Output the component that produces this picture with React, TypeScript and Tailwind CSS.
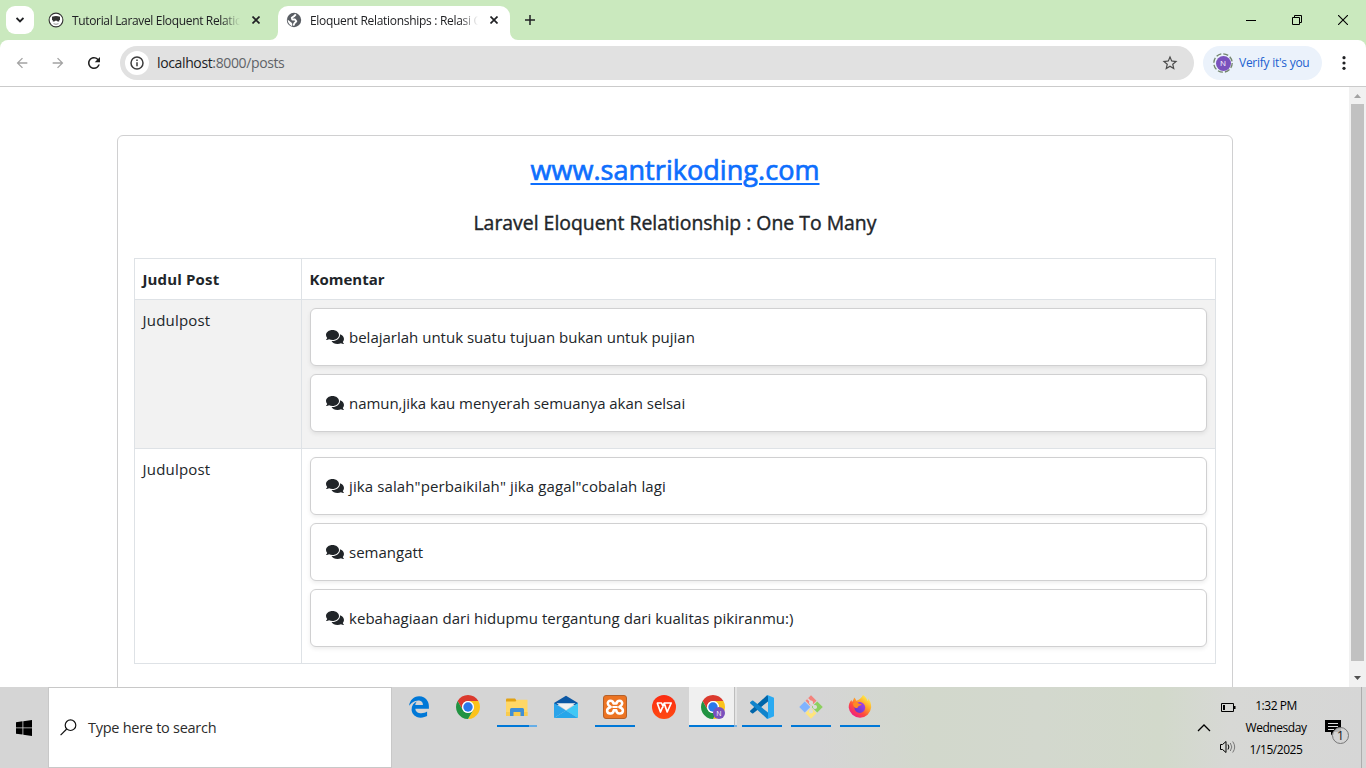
import React from "react";
import { FaComments, FaEdgeLegacy } from "react-icons/fa";
import { MdRefresh, MdStarBorder, MdArrowBack, MdArrowForward } from "react-icons/md";

type Comment = { text: string; tracking: string };
type Post = { title: string; comments: Comment[] };

const posts: Post[] = [
  {
    title: "Judulpost",
    comments: [
      { text: "belajarlah untuk suatu tujuan bukan untuk pujian", tracking: "tracking-normal" },
      { text: "namun,jika kau menyerah semuanya akan selsai", tracking: "tracking-[-0.040px]" },
    ],
  },
  {
    title: "Judulpost",
    comments: [
      { text: 'jika salah"perbaikilah" jika gagal"cobalah lagi', tracking: "tracking-[0.110px]" },
      { text: "semangatt", tracking: "tracking-normal" },
      { text: "kebahagiaan dari hidupmu tergantung dari kualitas pikiranmu:)", tracking: "tracking-[0.040px]" },
    ],
  },
];

function CloseGlyph() {
  return (
    <svg width="8" height="8" viewBox="0 0 8 8" stroke="#202124" strokeWidth="1.7">
      <path d="M.5.5l7 7M7.5.5l-7 7" />
    </svg>
  );
}

function GlobeIcon() {
  return (
    <svg width="16" height="16" viewBox="0 0 16 16">
      <circle cx="8" cy="8" r="7.200" fill="#5a5e64" />
      <path
        fill="none"
        stroke="#fff"
        strokeWidth="1.900"
        strokeLinejoin="round"
        d="M9.800 2.300L8 4.300 5.800 5.800 6.300 7.500H9L10.300 9.300 8.500 11.200 7.300 13.600"
      />
      <path fill="#fff" d="M1.600 7.600L5 10.200 6.200 11.500 6 14.200Q2 12.500 1.600 7.600z" />
    </svg>
  );
}

function ChromeIcon({ badge = false }: { badge?: boolean }) {
  return (
    <div className="relative size-6">
      <svg width="24" height="24" viewBox="0 0 48 48">
        <path fill="#db3a2e" d="M24 12H44.78A24 24 0 0 0 3.22 12L13.61 30A12 12 0 0 1 24 12Z" />
        <path fill="#fcc31c" d="M34.39 30L24 48A24 24 0 0 0 44.78 12H24A12 12 0 0 1 34.39 30Z" />
        <path fill="#229342" d="M13.61 30L3.22 12A24 24 0 0 0 24 48L34.39 30A12 12 0 0 1 13.61 30Z" />
        <circle cx="24" cy="24" r="12" fill="#fff" />
        <circle cx="24" cy="24" r="9.4" fill="#2b78ea" />
      </svg>
      {badge && (
        <span className="absolute left-3 top-3 flex size-3 items-center justify-center rounded-full bg-[#7a51bd] font-['Open_Sans',sans-serif] text-[7px] leading-none text-white">
          N
        </span>
      )}
    </div>
  );
}

function ExplorerIcon() {
  return (
    <svg width="24" height="24" viewBox="0 0 24 24">
      <path fill="#e2a213" d="M1 4.5q0-1 1-1h8l1.5 2v2H1z" />
      <path fill="#ffd766" d="M1 6.5h9.5l1.5-1.8h10.5V21H1z" />
      <path fill="#f9cb4d" d="M1 17h21.500v4H1z" />
      <path fill="#3f8fd6" d="M5 14.500q0-1.500 1.500-1.500h11q1.500 0 1.500 1.500V21h-3.500v-4h-7v4H5z" />
    </svg>
  );
}

function MailIcon() {
  return (
    <svg width="24" height="24" viewBox="0 0 24 24">
      <path fill="#0b57a4" d="M0 8L12 .8 24 8v2H0z" />
      <path fill="#f2f2f2" d="M2.500 8.300h19L12 15z" />
      <path fill="#3fc8f6" d="M24 8l-12 7.500L24 23z" />
      <path fill="#2ba4ea" d="M0 8v15l12-7.500z" />
      <path fill="#26a6ea" d="M0 23l12-7.500L24 23z" />
    </svg>
  );
}

function XamppIcon() {
  return (
    <svg width="24" height="24" viewBox="0 0 24 24">
      <rect x=".5" y=".5" width="23" height="23" rx="2.500" fill="#ec7423" stroke="#b4602a" />
      <g fill="none" stroke="#fff" strokeWidth="2.500" strokeLinecap="round" strokeLinejoin="round">
        <path d="M10.500 8.500C10 4.800 4.300 5 4.800 8.600c.2 1.600 1.300 2.200 2.900 3.400-2.500 1-3.900 2-3.600 4 .5 3.500 6.300 3.200 6.600-.7h2.600c.3 3.900 6.100 4.200 6.600.7.3-2-1.100-3-3.600-4 1.600-1.200 2.700-1.800 2.900-3.400.5-3.600-5.200-3.800-5.700-.1z" />
        <path d="M10 12h4" strokeWidth="1.800" />
      </g>
    </svg>
  );
}

function WpsIcon() {
  return (
    <svg width="24" height="24" viewBox="0 0 24 24">
      <defs>
        <linearGradient id="wps" x1="0" y1="0" x2="0" y2="1">
          <stop offset="0" stopColor="#fb2b12" />
          <stop offset="1" stopColor="#ff4a12" />
        </linearGradient>
      </defs>
      <circle cx="12" cy="12" r="12" fill="url(#wps)" />
      <path d="M4.800 8H9.500L11.500 12.500M5.200 8L8.500 17L12.200 8.200L15.200 17L19.200 8H12.200" fill="none" stroke="#fff" strokeWidth="1.700" strokeLinejoin="round" />
    </svg>
  );
}

function CodeIcon() {
  return (
    <svg width="24" height="24" viewBox="0 0 24 24">
      <path fill="#0065a9" d="M18 0v6.500L3.300 18.300a1 1 0 0 1-1.300 0L.4 16.900a1 1 0 0 1 0-1.500L16.500.8Q17.200 0 18 0z" />
      <path fill="#1084cc" d="M18 24v-6.500L3.300 5.700a1 1 0 0 0-1.300 0L.4 7.100a1 1 0 0 0 0 1.500L16.500 23.200q.7.8 1.500.8z" />
      <path fill="#2aaaf2" d="M17.500 0L24 2.800v18.400L17.500 24q-.7 0-1.500-.7 2 .5 2-1.300V2Q18 .2 16 .7q.8-.7 1.500-.7z" />
    </svg>
  );
}

function GitIcon() {
  return (
    <svg width="24" height="24" viewBox="0 0 24 24">
      <g transform="rotate(45 12 12)">
        <rect x="3.700" y="3.700" width="7.800" height="7.800" fill="#f4837d" />
        <rect x="12.500" y="3.700" width="7.800" height="7.800" fill="#8cd05f" />
        <rect x="3.700" y="12.500" width="7.800" height="7.800" fill="#80b3ff" />
        <rect x="12.500" y="12.500" width="7.800" height="7.800" fill="#ffe57c" />
      </g>
      <g stroke="#dcdcdc" strokeWidth="1.500" fill="#dcdcdc">
        <path d="M8.500 3.500L12 7v10M12 8l4 4" fill="none" />
        <circle cx="12" cy="7.500" r="1.300" />
        <circle cx="12" cy="16.500" r="1.300" />
        <circle cx="16" cy="12" r="1.300" />
      </g>
    </svg>
  );
}

function FirefoxIcon() {
  return (
    <svg width="24" height="24" viewBox="0 0 24 24">
      <defs>
        <linearGradient id="fox" x1=".85" y1=".1" x2=".2" y2=".95">
          <stop offset="0" stopColor="#fff04a" />
          <stop offset=".35" stopColor="#ffa52a" />
          <stop offset=".65" stopColor="#ff4d3c" />
          <stop offset="1" stopColor="#ed1a8a" />
        </linearGradient>
        <linearGradient id="globe" x1="0" y1="1" x2="1" y2="0">
          <stop offset="0" stopColor="#5a36c9" />
          <stop offset="1" stopColor="#b045e8" />
        </linearGradient>
      </defs>
      <path fill="url(#fox)" d="M15 0c3 2 4 4 4.500 6 1-.8.800-1.800.5-2.700 2 2 3.200 5 3.200 9A11.300 11.300 0 0 1 .7 12.500c0-3 1-5.700 2.800-7.500l.5 2C5 5.500 6 4.200 6 2.500c1.300 1 2 2 2.300 3.300C11 5 13.500 3 15 0z" />
      <circle cx="11.800" cy="12.500" r="5.400" fill="url(#globe)" />
      <path fill="#ff8a24" d="M5 8.500c2-2 4.500-1.700 6 .2 1 .2 2 .3 2.700.8-1 1.200-2.500 1-3.200 1.700-.8.700-.5 1.500-1.500 1.800-2 .6-4-1.500-4-4.500z" />
    </svg>
  );
}

type Task = { name: string; icon: React.ReactNode; state?: "open" | "multi" | "active" };

const tasks: Task[] = [
  { name: "edge", icon: <FaEdgeLegacy className="size-[22px] text-[#0078d7]" /> },
  { name: "chrome", icon: <ChromeIcon /> },
  { name: "explorer", icon: <ExplorerIcon />, state: "multi" },
  { name: "mail", icon: <MailIcon /> },
  { name: "xampp", icon: <XamppIcon />, state: "open" },
  { name: "wps", icon: <WpsIcon /> },
  { name: "chrome-profile", icon: <ChromeIcon badge />, state: "active" },
  { name: "code", icon: <CodeIcon />, state: "open" },
  { name: "git", icon: <GitIcon />, state: "open" },
  { name: "firefox", icon: <FirefoxIcon />, state: "open" },
];

function TaskButton({ task }: { task: Task }) {
  const active = task.state === "active";
  return (
    <div className={active ? "flex h-10 w-12 bg-[#e3e3e3]" : "flex h-10 w-12"}>
      <div className={active ? "flex w-full flex-col items-center bg-[linear-gradient(90deg,#f0f0f0_45px,#bdbdbd_45px,#bdbdbd_46px,#e3e3e3_46px)]" : "flex w-full flex-col items-center"}>
        <div className="flex h-[38px] items-center pt-[2px]">{task.icon}</div>
        {task.state === "open" && <div className="h-[2px] w-10 bg-[#0078d7]" />}
        {task.state === "multi" && (
          <div className="flex h-[2px] w-10">
            <div className="w-8 bg-[#0078d7]" />
            <div className="w-2 bg-[#66aee7]" />
          </div>
        )}
        {active && (
          <div className="flex h-[2px] w-12">
            <div className="w-[45px] bg-[#0078d7]" />
            <div className="w-[3px] bg-[#79b2e2]" />
          </div>
        )}
      </div>
    </div>
  );
}

function TabStrip() {
  return (
    <div className="flex h-10 shrink-0 bg-[#cae9be] text-[12px] text-[#202124]">
      <div className="ml-[6px] mt-[6px] flex size-7 items-center justify-center rounded-[9px] bg-white">
        <svg width="8" height="6" viewBox="0 0 8 6" fill="none" stroke="#202124" strokeWidth="1.900">
          <path d="M.5 1L4 4.500 7.500 1" />
        </svg>
      </div>
      <div className="ml-[14px] flex w-[222px] items-center">
        <svg width="16" height="16" viewBox="0 0 16 16">
          <circle cx="8" cy="8" r="6.900" fill="#fff" stroke="#333" strokeWidth="1.100" />
          <path fill="#333" d="M4 4.700Q8 3.200 12 4.700V8l-.8.3V9.500H9.500L9 8.700H7l-.5.8H4.800V8.300L4 8z" />
          <path d="M5.500 11.700q2.500 1.200 5 0" stroke="#777" strokeWidth=".8" fill="none" />
        </svg>
        <span className="ml-2 w-[168px] overflow-hidden whitespace-nowrap pt-px tracking-[-0.340px] [mask-image:linear-gradient(90deg,#000_150px,transparent_168px)]">
          Tutorial Laravel Eloquent Relatic
        </span>
        <span className="ml-[12px]"><CloseGlyph /></span>
      </div>
      <svg className="self-end" width="8" height="8" viewBox="0 0 8 8"><path fill="#fff" d="M8 0v8H0A8 8 0 0 0 8 0z" /></svg>
      <div className="mt-[6px] flex w-[232px] items-center rounded-t-[10px] bg-white pb-[6px] pl-2">
        <GlobeIcon />
        <span className="ml-2 w-[168px] overflow-hidden whitespace-nowrap pt-px tracking-[-0.300px] [mask-image:linear-gradient(90deg,#000_150px,transparent_168px)]">
          Eloquent Relationships : Relasi C
        </span>
        <span className="ml-[12px]"><CloseGlyph /></span>
      </div>
      <svg className="self-end" width="8" height="8" viewBox="0 0 8 8"><path fill="#fff" d="M0 0v8h8A8 8 0 0 1 0 0z" /></svg>
      <div className="ml-[7px] flex items-center">
        <svg width="10" height="10" viewBox="0 0 10 10" stroke="#202124" strokeWidth="1.500"><path d="M5 0v10M0 5h10" /></svg>
      </div>
      <div className="ml-auto flex">
        <div className="flex w-[46px] items-center justify-center"><div className="h-px w-[10px] bg-black" /></div>
        <div className="flex w-[46px] items-center justify-center">
          <svg width="10" height="10" viewBox="0 0 10 10" fill="none" stroke="#000"><path d="M.5 2.500h7v7h-7zM2.500 2.500v-2h7v7h-2" /></svg>
        </div>
        <div className="flex w-[46px] items-center justify-center">
          <svg width="10" height="10" viewBox="0 0 10 10" stroke="#000" strokeWidth="1.100"><path d="M0 0l10 10M10 0L0 10" /></svg>
        </div>
      </div>
    </div>
  );
}

function Toolbar() {
  return (
    <div className="h-[47px] shrink-0 bg-[#cae9be]">
      <div className="flex h-full items-center rounded-t-lg border-b border-[#cbcbcb] bg-white">
        <MdArrowBack className="ml-[14px] size-4 text-[#a3a3a3]" />
        <MdArrowForward className="ml-5 size-4 text-[#a3a3a3]" />
        <MdRefresh className="ml-[19px] size-[18px] text-[#1f1f1f]" />
        <div className="ml-[17px] flex h-[34px] w-[1074px] items-center rounded-full bg-[#e1e1e1] pl-[5px] pr-[15px]">
          <div className="flex size-6 items-center justify-center rounded-full bg-white">
            <svg width="14" height="14" viewBox="0 0 14 14" fill="none" stroke="#3c3c3c" strokeWidth="1.500">
              <circle cx="7" cy="7" r="6" />
              <path d="M7 6.200v4M7 3.600v1.500" />
            </svg>
          </div>
          <span className="ml-2 pb-px text-[14px] tracking-[-0.37px] text-[#202124]">
            localhost<span className="text-[#5f6368]">:8000/posts</span>
          </span>
          <MdStarBorder className="ml-auto size-[18px] text-[#4a4a4a]" />
        </div>
        <div className="ml-[9px] flex h-[34px] w-[119px] items-center rounded-full bg-[#ebf2fb] pl-[10px]">
          <div className="relative flex size-5 items-center justify-center">
            <svg className="absolute inset-0" width="20" height="20" viewBox="0 0 20 20" fill="none" stroke="#72846c" strokeWidth="1.300">
              <circle cx="10" cy="10" r="9.200" strokeDasharray="5.200 2.025" />
            </svg>
            <span className="flex size-[15px] items-center justify-center rounded-full bg-[#7a51bd] text-[8px] leading-none text-white">N</span>
          </div>
          <span className="ml-[6px] whitespace-nowrap text-[12px] tracking-[-0.26px] text-[#1b5fd0]">Verify it's you</span>
        </div>
        <svg className="ml-[20px]" width="4" height="14" viewBox="0 0 4 14" fill="#202124">
          <circle cx="2" cy="1.700" r="1.600" /><circle cx="2" cy="7" r="1.600" /><circle cx="2" cy="12.300" r="1.600" />
        </svg>
      </div>
    </div>
  );
}

function CommentCard({ comment }: { comment: Comment }) {
  return (
    <div className="mb-2 flex h-[58px] items-center rounded-md border border-[#d0d0d1] bg-white pl-[15px] pr-4 shadow-[0_2px_4px_rgba(0,0,0,0.075)]">
      <FaComments className="h-4 w-[18px] shrink-0" preserveAspectRatio="none" />
      <span className={"ml-[5px] whitespace-nowrap " + comment.tracking}>{comment.text}</span>
    </div>
  );
}

function Page() {
  return (
    <div className="flex min-h-0 flex-1">
      <main className="flex-1 overflow-hidden bg-white px-[117px] pt-12 text-[15px] leading-6 text-[#212529]">
        <div className="h-[620px] w-[1116px] rounded-md border border-[#d0d0d1] p-4">
          <h3 className="pt-px text-center text-[27px] font-normal leading-[34px] tracking-[0.05px] [-webkit-text-stroke:0.700px]">
            <a className="text-[#0d6efd] underline decoration-2 underline-offset-[3px]">www.santrikoding.com</a>
          </h3>
          <h5 className="mt-[24px] text-center text-[19.400px] font-normal leading-6 tracking-normal [-webkit-text-stroke:0.400px]">Laravel Eloquent Relationship : One To Many</h5>
          <table className="mt-[23px] w-[1082px] table-fixed border-collapse">
            <thead>
              <tr>
                <th className="w-[167px] border border-[#dee2e6] p-2 pl-[7.500px] text-left font-bold tracking-[0.150px]">Judul Post</th>
                <th className="border border-[#dee2e6] p-2 pl-[7.500px] text-left font-bold">Komentar</th>
              </tr>
            </thead>
            <tbody>
              {posts.map((post, i) => (
                <tr key={i} className="odd:bg-[#f2f2f2]">
                  <td className="border border-[#dee2e6] p-2 pl-[7.500px] align-top tracking-[0.200px]">{post.title}</td>
                  <td className="border border-[#dee2e6] p-2 align-top">
                    {post.comments.map((c) => <CommentCard key={c.text} comment={c} />)}
                  </td>
                </tr>
              ))}
            </tbody>
          </table>
        </div>
      </main>
      <div className="flex w-[17px] shrink-0 flex-col items-center bg-[#f1f1f1]">
        <svg width="17" height="17" viewBox="0 0 17 17" className="shrink-0"><path fill="#a3a3a3" d="M5 11h7L8.500 7z" /></svg>
        <div className="w-[13px] flex-1 bg-[#c1c1c1]" />
        <svg width="17" height="26" viewBox="0 0 17 26" className="shrink-0"><path fill="#505050" d="M5 15h7l-3.500 4z" /></svg>
      </div>
    </div>
  );
}

function Taskbar() {
  return (
    <div className="flex h-[81px] shrink-0 bg-[linear-gradient(90deg,#d5d5d5_0%,#d5d5d5_60%,#d2d8cc_68%,#d3d8ce_76%,#d2d9cb_85%,#d7d8d5_90%,#d6d6d6_100%)]">
      <div className="flex w-12 items-center justify-center">
        <svg width="16" height="16" viewBox="0 0 16 16"><path d="M0 2.200l6.500-.9v6.200H0zM7.300 1.200L16 0v7.500H7.300zM0 8.300h6.500v6.200L0 13.700zM7.300 8.300H16V16l-8.700-1.200z" /></svg>
      </div>
      <div className="flex w-[344px] items-center border border-[#c8c8c8] bg-white pl-[11px]">
        <svg width="17" height="17" viewBox="0 0 17 17" fill="none" stroke="#111" strokeWidth="1.200">
          <circle cx="10.500" cy="6.200" r="5.300" /><path d="M6.700 10L.6 16.200" />
        </svg>
        <span className="ml-[11px] text-[14.500px] tracking-[-0.270px] text-[#2c2c2c]">Type here to search</span>
      </div>
      <div className="ml-[3px] flex gap-px">
        {tasks.map((t) => <TaskButton key={t.name} task={t} />)}
      </div>
      <div className="ml-auto flex items-center text-[12px] text-black">
        <svg width="14" height="8" viewBox="0 0 14 8" fill="none" stroke="#000" strokeWidth="1.300"><path d="M1 7l6-6 6 6" /></svg>
        <div className="ml-[9px] flex w-4 flex-col items-center gap-[27px] pt-[2px]">
          <svg width="16" height="10" viewBox="0 0 16 10"><path fill="none" stroke="#000" d="M1.500.5h12v8h-12z" /><path d="M3 2h2v5H3zM14 3h1.500v3H14z" /></svg>
          <svg width="16" height="14" viewBox="0 0 16 14" fill="none" stroke="#000">
            <path d="M.5 4.500h2L6 1.500v11l-3.500-3h-2zM8 4.500q1.800 2.500 0 5" />
            <path stroke="#777" d="M10.300 3q3 4 0 8M12.700 1.500q4 5.500 0 11" />
          </svg>
        </div>
        <div className="ml-[6px] flex w-[68px] flex-col items-center leading-[22px] tracking-[-0.450px]">
          <span className="whitespace-nowrap">1:32 PM</span>
          <span className="whitespace-nowrap">Wednesday</span>
          <span className="whitespace-nowrap">1/15/2025</span>
        </div>
        <div className="relative ml-[15px] mr-5 size-4">
          <svg width="16" height="16" viewBox="0 0 16 16"><path d="M0 0h16v12H8.500L6 15.500V12H0z" /><path stroke="#ddd" d="M3 3.500h10M3 6.500h10M3 9.500h6" /></svg>
          <span className="absolute left-[7px] top-[7px] flex size-[17px] items-center justify-center rounded-full border border-[#777] bg-[#d4d4d4]/85 text-[13px] leading-none text-[#222]">1</span>
        </div>
        <div className="mr-1 h-[81px] w-px bg-[#adadad]" />
      </div>
    </div>
  );
}

export default function App() {
  return (
    <div className="flex h-[768px] w-[1366px] flex-col overflow-hidden bg-white font-['Open_Sans','Noto_Sans',sans-serif]">
      <TabStrip />
      <Toolbar />
      <Page />
      <Taskbar />
    </div>
  );
}
